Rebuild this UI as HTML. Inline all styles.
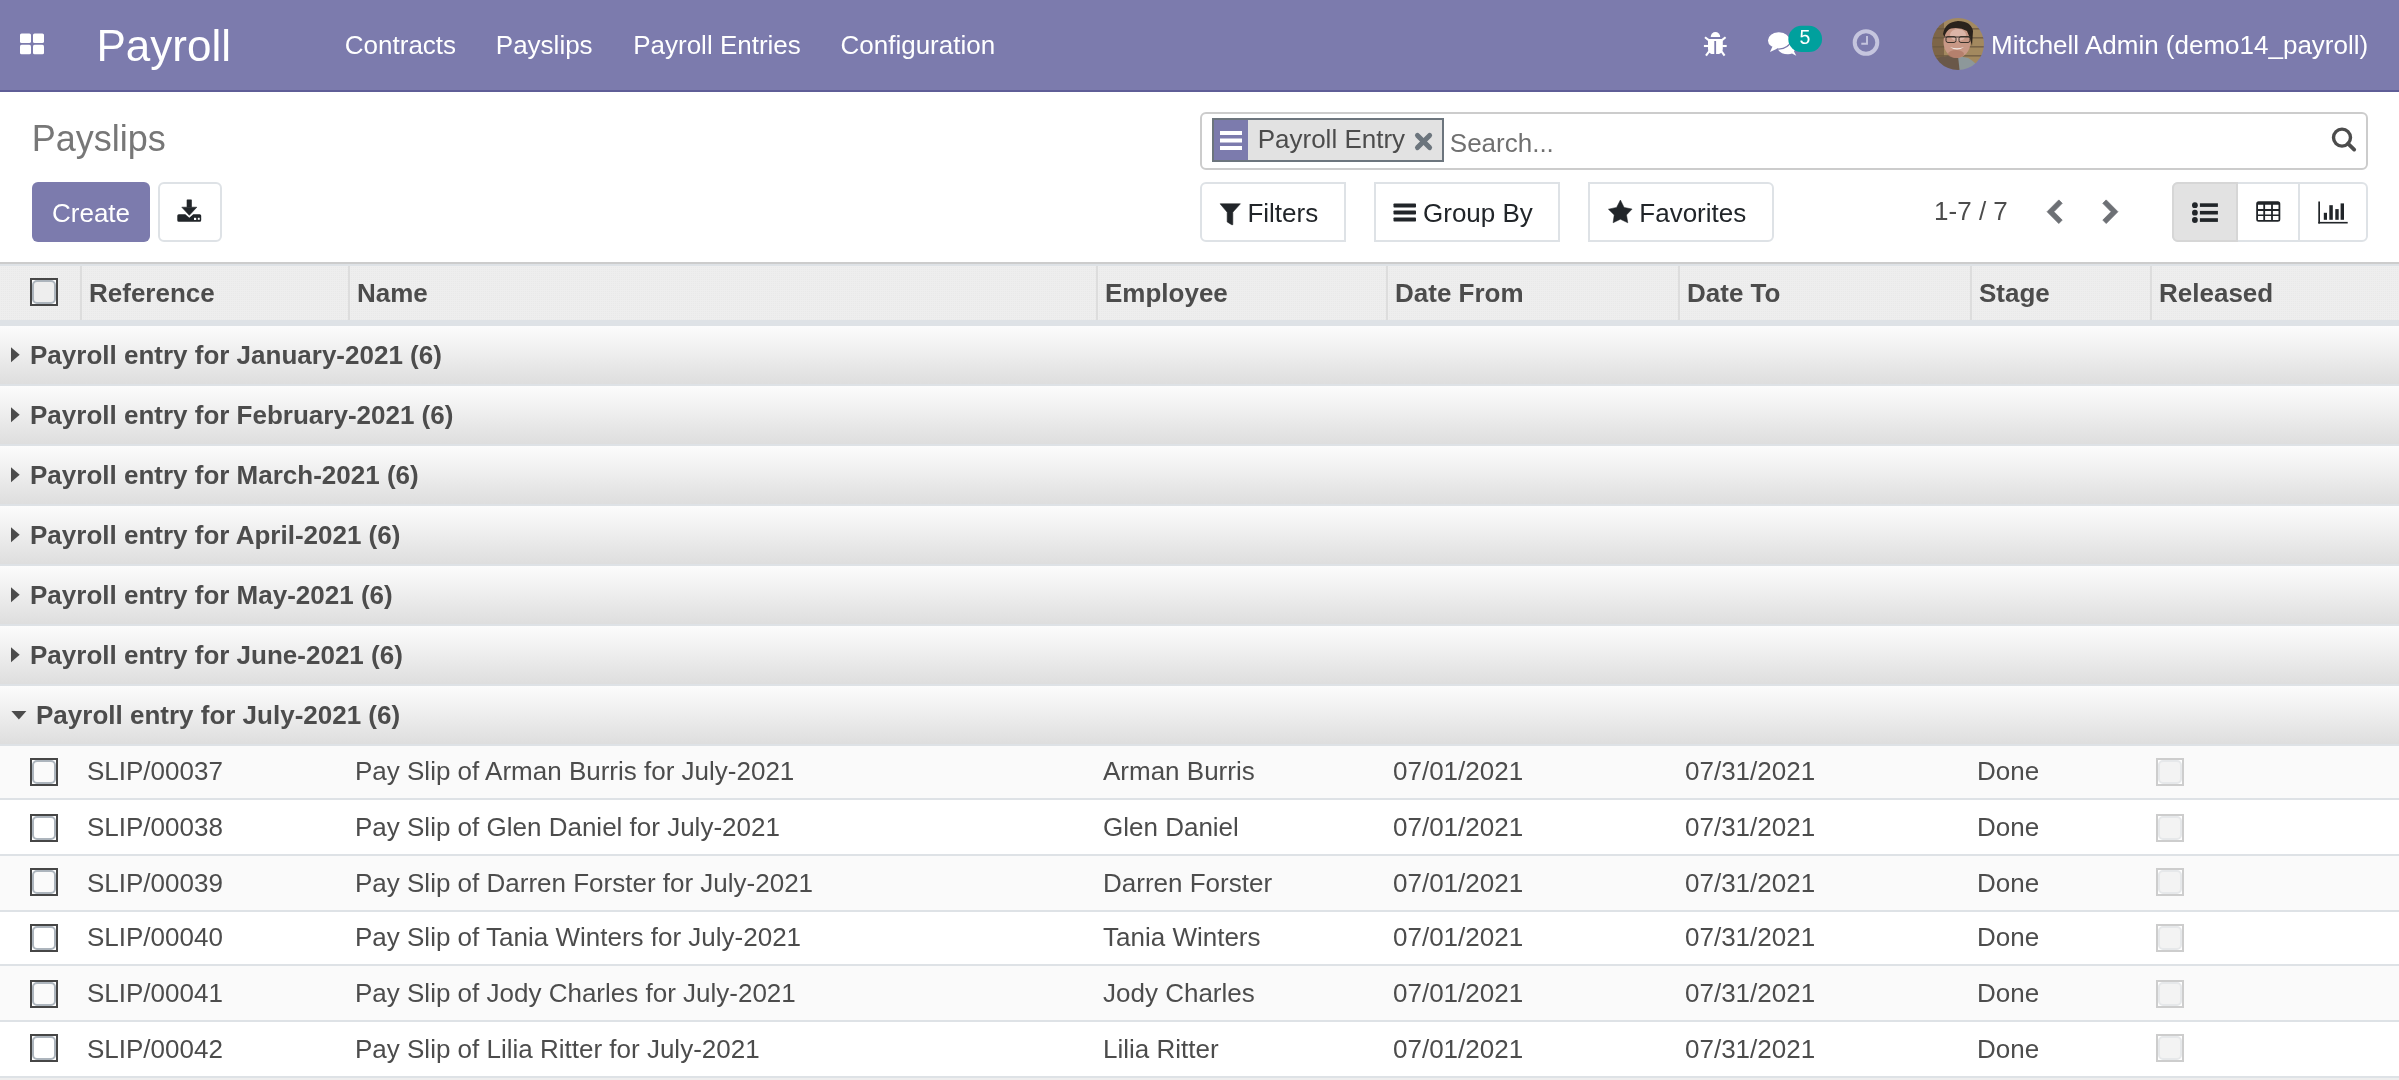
<!DOCTYPE html>
<html><head><meta charset="utf-8"><title>Payslips - Odoo</title>
<style>
html,body{margin:0;padding:0;width:2399px;height:1080px;overflow:hidden;background:#fff;font-family:"Liberation Sans", sans-serif;}
.a{position:absolute;white-space:nowrap;}
#root{position:absolute;left:0;top:0;width:2399px;height:1080px;overflow:hidden;will-change:transform}
svg.a{overflow:visible}
</style></head><body><div id="root">
<div class="a" style="left:0px;top:0px;width:2399px;height:90px;background:#7c7bad"></div>
<div class="a" style="left:0px;top:90px;width:2399px;height:2px;background:#5f5e97"></div>
<svg class="a" style="left:20px;top:33px" width="25" height="22" viewBox="0 0 25 22"><g fill="#fff"><rect x="0" y="0.5" width="11" height="9.5" rx="1.6"/><rect x="13" y="0.5" width="11" height="9.5" rx="1.6"/><rect x="0" y="11.8" width="11" height="9.5" rx="1.6"/><rect x="13" y="11.8" width="11" height="9.5" rx="1.6"/></g></svg>
<div class="a" style="left:96.5px;top:23.5px;font-size:44px;line-height:44px;color:#fff;">Payroll</div>
<div class="a" style="left:344.8px;top:32px;font-size:26px;line-height:26px;color:#fff;">Contracts</div>
<div class="a" style="left:495.8px;top:32px;font-size:26px;line-height:26px;color:#fff;">Payslips</div>
<div class="a" style="left:633.2px;top:32px;font-size:26px;line-height:26px;color:#fff;">Payroll Entries</div>
<div class="a" style="left:840.5px;top:32px;font-size:26px;line-height:26px;color:#fff;">Configuration</div>
<svg class="a" style="left:1695px;top:25px" width="40" height="40" viewBox="0 0 40 40"><g fill="#fff">
<path d="M15.7 12 A4.75 5 0 0 1 25.2 12 Z"/>
<path d="M13 14.1 H27.8 V24 Q27.5 28 24 28.9 Q22.5 29.2 21.1 28.9 V15.9 H19.3 V28.9 Q17.9 29.2 16.5 28.9 Q13.2 28 13 24 Z"/>
</g><g stroke="#fff" stroke-width="2.1" stroke-linecap="butt">
<line x1="10" y1="12.2" x2="14" y2="15.4"/><line x1="30.6" y1="12.2" x2="26.6" y2="15.4"/>
<line x1="8.9" y1="21" x2="13.5" y2="21"/><line x1="31.7" y1="21" x2="27.3" y2="21"/>
<line x1="11" y1="30.6" x2="14.5" y2="25.8"/><line x1="29.6" y1="30.6" x2="26.1" y2="25.8"/>
</g></svg>
<svg class="a" style="left:1760px;top:20px" width="70" height="45" viewBox="0 0 70 45"><g fill="#fff">
<path d="M17 28 Q20 34.2 28 34.2 Q30.5 34.2 32 33.6 L36.3 35.8 L34 31.5 Q35.5 29 35 26 Q34 22 29 20 Z"/>
<ellipse cx="18.8" cy="20.4" rx="11.5" ry="8.7" stroke="#7c7bad" stroke-width="1.3"/>
<path d="M10 31.9 L12.6 26.2 L17.5 28.6 Z"/>
</g>
<rect x="28.3" y="5.8" width="33.8" height="26.3" rx="13.1" fill="#00a09d"/></svg>
<div class="a" style="left:1788px;top:24px;width:34px;height:26px;line-height:26px;text-align:center;font-size:19.5px;color:#fff">5</div>
<svg class="a" style="left:1845px;top:22px" width="40" height="40" viewBox="0 0 40 40"><g fill="none" stroke="#c5c5de" stroke-width="4"><circle cx="21" cy="20.5" r="11.3"/></g>
<g stroke="#c5c5de" stroke-width="1.9" fill="none"><path d="M22 14 V21.8 H16.3"/></g></svg>
<svg class="a" style="left:1932px;top:18px" width="52" height="52" viewBox="0 0 52 52"><defs><clipPath id="cav"><circle cx="26" cy="26" r="26"/></clipPath><filter id="bl" x="-10%" y="-10%" width="120%" height="120%"><feGaussianBlur stdDeviation="0.7"/></filter></defs>
<g clip-path="url(#cav)"><g filter="url(#bl)">
<rect x="-2" y="-2" width="56" height="56" fill="#a3895f"/>
<rect x="-2" y="-2" width="14" height="56" fill="#7d6547"/>
<g fill="#6e5a40" opacity="0.8"><rect x="0" y="10" width="52" height="1.6"/><rect x="0" y="19" width="52" height="1.6"/><rect x="0" y="28" width="52" height="1.6"/><rect x="0" y="37" width="52" height="1.6"/><rect x="0" y="46" width="52" height="1.6"/></g>
<path d="M-2 54 L-2 44 Q6 38 16 38 L30 40 Q40 42 46 48 L46 54 Z" fill="#6a5848"/>
<path d="M26 38 L36 40 Q44 44 48 52 L48 56 L28 56 Z" fill="#8d989a"/>
<ellipse cx="25" cy="24" rx="13.5" ry="16" fill="#c89886"/>
<ellipse cx="26" cy="17" rx="8" ry="6" fill="#e0bdb0" opacity="0.8"/>
<ellipse cx="24" cy="36" rx="8" ry="4" fill="#b07a66" opacity="0.8"/>
<path d="M11 16 Q13 4 26 3 Q39 3 41 13 L40 28 Q38 19 35 13 Q28 9 19 10.5 Q14 12 12.5 19 Z" fill="#2b211b"/>
<g stroke="#3a322c" stroke-width="1" fill="none"><path d="M12 19 H39"/><rect x="14" y="18.5" width="10" height="6" rx="2"/><rect x="27" y="18.5" width="11" height="6" rx="2"/></g>
<path d="M18 29 Q25 34 32 29 Q25 31.5 18 29 Z" fill="#f4ece8"/>
</g></g></svg>
<div class="a" style="left:1991px;top:32px;font-size:26px;line-height:26px;color:#fff;">Mitchell Admin (demo14_payroll)</div>
<div class="a" style="left:31.7px;top:120.80000000000001px;font-size:36px;line-height:36px;color:#777777;">Payslips</div>
<div class="a" style="left:1200px;top:112px;width:1168px;height:58px;box-sizing:border-box;border:2px solid #cccccc;border-radius:6px;background:#fff"></div>
<div class="a" style="left:1212px;top:118px;width:232px;height:44px;box-sizing:border-box;border:2px solid #6c757d;background:#e2e2e2"></div>
<div class="a" style="left:1214px;top:120px;width:34px;height:40px;background:#7c7bad"></div>
<svg class="a" style="left:1220px;top:130px" width="23" height="21" viewBox="0 0 23 21"><g fill="#fff"><rect x="0" y="1" width="22" height="4"/><rect x="0" y="8.5" width="22" height="4"/><rect x="0" y="16" width="22" height="4"/></g></svg>
<div class="a" style="left:1257.7px;top:126px;font-size:26px;line-height:26px;color:#4c4c4c;">Payroll Entry</div>
<svg class="a" style="left:1413px;top:131px" width="21" height="21" viewBox="0 0 21 21"><g stroke="#6c757d" stroke-width="5" stroke-linecap="round"><line x1="4.5" y1="4.4" x2="16.6" y2="16.6"/><line x1="16.6" y1="4.4" x2="4.5" y2="16.6"/></g></svg>
<div class="a" style="left:1449.8px;top:129.8px;font-size:26px;line-height:26px;color:#707070;">Search...</div>
<svg class="a" style="left:2330px;top:125px" width="30" height="30" viewBox="0 0 30 30"><g stroke="#4c4c4c" fill="none"><circle cx="12" cy="12.6" r="8.5" stroke-width="3.4"/><line x1="18" y1="18.6" x2="24.2" y2="24.6" stroke-width="3.8" stroke-linecap="round"/></g></svg>
<div class="a" style="left:32px;top:182px;width:118px;height:60px;background:#7c7bad;border-radius:6px"></div>
<div class="a" style="left:52px;top:200px;font-size:26px;line-height:26px;color:#fff;">Create</div>
<div class="a" style="left:158px;top:182px;width:64px;height:60px;box-sizing:border-box;border:2px solid #dee2e6;border-radius:6px;background:#fff"></div>
<svg class="a" style="left:176px;top:198px" width="28" height="26" viewBox="0 0 28 26"><g fill="#212529"><rect x="10.7" y="1.5" width="5.1" height="8" rx="0.6"/><path d="M5.8 9.2 H20.8 L13.3 17.3 Z" stroke="#212529" stroke-width="0.6" stroke-linejoin="round"/><path d="M2.8 16.3 H9.3 L13.3 19.8 L17.3 16.3 H23.7 Q25.2 16.3 25.2 17.8 V22.2 Q25.2 23.7 23.7 23.7 H2.8 Q1.3 23.7 1.3 22.2 V17.8 Q1.3 16.3 2.8 16.3 Z"/></g><g fill="#fff"><rect x="18" y="19.8" width="2.2" height="2.2"/><rect x="21.8" y="19.8" width="1.9" height="2"/></g></svg>
<div class="a" style="left:1200px;top:182px;width:146px;height:60px;box-sizing:border-box;border:2px solid #dee2e6;border-radius:6px 0 0 6px;background:#fff"></div>
<div class="a" style="left:1374px;top:182px;width:186px;height:60px;box-sizing:border-box;border:2px solid #dee2e6;background:#fff"></div>
<div class="a" style="left:1588px;top:182px;width:186px;height:60px;box-sizing:border-box;border:2px solid #dee2e6;border-radius:0 6px 6px 0;background:#fff"></div>
<svg class="a" style="left:1219px;top:202px" width="23" height="24" viewBox="0 0 23 24"><path d="M1.1 1.8 H21.4 L13.8 10.2 V22.7 L12.7 22.7 L8.2 19.9 V10.2 Z" fill="#212529" stroke="#212529" stroke-width="0.6" stroke-linejoin="round"/></svg>
<div class="a" style="left:1247.4px;top:200px;font-size:26px;line-height:26px;color:#212529;">Filters</div>
<svg class="a" style="left:1393px;top:202px" width="24" height="22" viewBox="0 0 24 22"><g fill="#212529"><rect x="0.5" y="1.5" width="22.5" height="4" rx="0.8"/><rect x="0.5" y="8.5" width="22.5" height="4" rx="0.8"/><rect x="0.5" y="15.5" width="22.5" height="4" rx="0.8"/></g></svg>
<div class="a" style="left:1423px;top:200px;font-size:26px;line-height:26px;color:#212529;">Group By</div>
<svg class="a" style="left:1607px;top:199px" width="26" height="26" viewBox="0 0 26 26"><path d="M13.4 1 L17.1 8.4 L25.1 10.1 L19.5 15.9 L20.8 23.8 L13.4 20.2 L6.1 23.8 L7.2 15.9 L1.4 10.2 L9.6 8.4 Z" fill="#212529" stroke="#212529" stroke-width="0.5" stroke-linejoin="round"/></svg>
<div class="a" style="left:1639.3px;top:200px;font-size:26px;line-height:26px;color:#212529;">Favorites</div>
<div class="a" style="left:1934.1px;top:198px;font-size:26px;line-height:26px;color:#4c4c4c;">1-7 / 7</div>
<svg class="a" style="left:2045px;top:198px" width="20" height="28" viewBox="0 0 20 28"><path d="M2.1 13.7 L13.8 1.9 L17.2 5.3 L8.9 13.7 L17.2 22.1 L13.8 25.5 Z" fill="#6d7075" stroke="#6d7075" stroke-width="0.8" stroke-linejoin="round"/></svg>
<svg class="a" style="left:2100px;top:198px" width="20" height="28" viewBox="0 0 20 28"><path d="M17.9 13.7 L6.2 1.9 L2.8 5.3 L11.1 13.7 L2.8 22.1 L6.2 25.5 Z" fill="#6d7075" stroke="#6d7075" stroke-width="0.8" stroke-linejoin="round"/></svg>
<div class="a" style="left:2172px;top:182px;width:196px;height:60px;box-sizing:border-box;border:2px solid #dee2e6;border-radius:6px;background:#fff"></div>
<div class="a" style="left:2172px;top:182px;width:66px;height:60px;box-sizing:border-box;border:2px solid #d6d6d6;border-radius:6px 0 0 6px;background:#e2e2e2"></div>
<div class="a" style="left:2298px;top:184px;width:2px;height:56px;background:#dee2e6"></div>
<svg class="a" style="left:2190px;top:200px" width="30" height="25" viewBox="0 0 30 25"><g fill="#212529"><circle cx="4.9" cy="5.2" r="2.9"/><circle cx="4.9" cy="12.7" r="2.9"/><circle cx="4.9" cy="20" r="2.9"/><rect x="9.9" y="3.3" width="18" height="3.6"/><rect x="9.9" y="10.9" width="18" height="3.6"/><rect x="9.9" y="18.2" width="18" height="3.7"/></g></svg>
<svg class="a" style="left:2255px;top:200px" width="27" height="24" viewBox="0 0 27 24"><path fill-rule="evenodd" fill="#212529" d="M3.7 1.2 H22.8 Q25.3 1.2 25.3 3.7 V19.2 Q25.3 21.7 22.8 21.7 H3.7 Q1.2 21.7 1.2 19.2 V3.7 Q1.2 1.2 3.7 1.2 Z M3 4.7 V8.9 H8.3 V4.7 Z M10.1 4.7 V8.9 H16.1 V4.7 Z M17.9 4.7 V8.9 H23.5 V4.7 Z M3 10.9 V14.4 H8.3 V10.9 Z M10.1 10.9 V14.4 H16.1 V10.9 Z M17.9 10.9 V14.4 H23.5 V10.9 Z M3 16.1 V19.9 H8.3 V16.1 Z M10.1 16.1 V19.9 H16.1 V16.1 Z M17.9 16.1 V19.9 H23.5 V16.1 Z"/></svg>
<svg class="a" style="left:2316px;top:199px" width="34" height="27" viewBox="0 0 34 27"><g fill="#212529"><rect x="2.3" y="2.5" width="1.7" height="22"/><rect x="2.3" y="22.9" width="29.4" height="1.6"/><rect x="7.8" y="13.8" width="3.2" height="7"/><rect x="13.3" y="6.2" width="3.5" height="14.6"/><rect x="19.3" y="10.1" width="3.4" height="10.7"/><rect x="24.6" y="4.4" width="3.4" height="16.4"/></g></svg>
<div class="a" style="left:0px;top:262px;width:2399px;height:2px;background:#cccccc"></div>
<div class="a" style="left:0px;top:264px;width:2399px;height:2px;background:#dee2e6"></div>
<div class="a" style="left:0px;top:266px;width:2399px;height:54px;background-color:#eeeeee;background-image:linear-gradient(90deg,#eeeeee 1px,transparent 1px),linear-gradient(#eeeeee 1px,#e9e9e9 1px);background-size:2px 2px"></div>
<div class="a" style="left:0px;top:320px;width:2399px;height:6px;background:#dee2e6"></div>
<div class="a" style="left:80px;top:266px;width:2px;height:54px;background:#dddddd"></div>
<div class="a" style="left:348px;top:266px;width:2px;height:54px;background:#dddddd"></div>
<div class="a" style="left:1096px;top:266px;width:2px;height:54px;background:#dddddd"></div>
<div class="a" style="left:1386px;top:266px;width:2px;height:54px;background:#dddddd"></div>
<div class="a" style="left:1678px;top:266px;width:2px;height:54px;background:#dddddd"></div>
<div class="a" style="left:1970px;top:266px;width:2px;height:54px;background:#dddddd"></div>
<div class="a" style="left:2150px;top:266px;width:2px;height:54px;background:#dddddd"></div>
<div class="a" style="left:30px;top:278px;width:28px;height:28px;box-sizing:border-box;border:2px solid #464646;background:#fff"></div>
<div class="a" style="left:32px;top:280px;width:24px;height:24px;box-sizing:border-box;border:2px solid #adb5bd;border-radius:5px;background:#eeeeee"></div>
<div class="a" style="left:89px;top:280px;font-size:26px;line-height:26px;color:#4c4c4c;font-weight:bold;">Reference</div>
<div class="a" style="left:357px;top:280px;font-size:26px;line-height:26px;color:#4c4c4c;font-weight:bold;">Name</div>
<div class="a" style="left:1105px;top:280px;font-size:26px;line-height:26px;color:#4c4c4c;font-weight:bold;">Employee</div>
<div class="a" style="left:1395px;top:280px;font-size:26px;line-height:26px;color:#4c4c4c;font-weight:bold;">Date From</div>
<div class="a" style="left:1687px;top:280px;font-size:26px;line-height:26px;color:#4c4c4c;font-weight:bold;">Date To</div>
<div class="a" style="left:1979px;top:280px;font-size:26px;line-height:26px;color:#4c4c4c;font-weight:bold;">Stage</div>
<div class="a" style="left:2159px;top:280px;font-size:26px;line-height:26px;color:#4c4c4c;font-weight:bold;">Released</div>
<div class="a" style="left:0px;top:326px;width:2399px;height:58px;background:linear-gradient(#fcfcfc,#dedede)"></div>
<div class="a" style="left:0px;top:384px;width:2399px;height:2px;background:#dee2e6"></div>
<svg class="a" style="left:10px;top:346px" width="12" height="18" viewBox="0 0 12 18"><path d="M1 1.2 L9.7 8.7 L1 16.2 Z" fill="#4c4c4c"/></svg>
<div class="a" style="left:30px;top:342px;font-size:26px;line-height:26px;color:#4c4c4c;font-weight:bold;">Payroll entry for January-2021 (6)</div>
<div class="a" style="left:0px;top:386px;width:2399px;height:58px;background:linear-gradient(#fcfcfc,#dedede)"></div>
<div class="a" style="left:0px;top:444px;width:2399px;height:2px;background:#dee2e6"></div>
<svg class="a" style="left:10px;top:406px" width="12" height="18" viewBox="0 0 12 18"><path d="M1 1.2 L9.7 8.7 L1 16.2 Z" fill="#4c4c4c"/></svg>
<div class="a" style="left:30px;top:402px;font-size:26px;line-height:26px;color:#4c4c4c;font-weight:bold;">Payroll entry for February-2021 (6)</div>
<div class="a" style="left:0px;top:446px;width:2399px;height:58px;background:linear-gradient(#fcfcfc,#dedede)"></div>
<div class="a" style="left:0px;top:504px;width:2399px;height:2px;background:#dee2e6"></div>
<svg class="a" style="left:10px;top:466px" width="12" height="18" viewBox="0 0 12 18"><path d="M1 1.2 L9.7 8.7 L1 16.2 Z" fill="#4c4c4c"/></svg>
<div class="a" style="left:30px;top:462px;font-size:26px;line-height:26px;color:#4c4c4c;font-weight:bold;">Payroll entry for March-2021 (6)</div>
<div class="a" style="left:0px;top:506px;width:2399px;height:58px;background:linear-gradient(#fcfcfc,#dedede)"></div>
<div class="a" style="left:0px;top:564px;width:2399px;height:2px;background:#dee2e6"></div>
<svg class="a" style="left:10px;top:526px" width="12" height="18" viewBox="0 0 12 18"><path d="M1 1.2 L9.7 8.7 L1 16.2 Z" fill="#4c4c4c"/></svg>
<div class="a" style="left:30px;top:522px;font-size:26px;line-height:26px;color:#4c4c4c;font-weight:bold;">Payroll entry for April-2021 (6)</div>
<div class="a" style="left:0px;top:566px;width:2399px;height:58px;background:linear-gradient(#fcfcfc,#dedede)"></div>
<div class="a" style="left:0px;top:624px;width:2399px;height:2px;background:#dee2e6"></div>
<svg class="a" style="left:10px;top:586px" width="12" height="18" viewBox="0 0 12 18"><path d="M1 1.2 L9.7 8.7 L1 16.2 Z" fill="#4c4c4c"/></svg>
<div class="a" style="left:30px;top:582px;font-size:26px;line-height:26px;color:#4c4c4c;font-weight:bold;">Payroll entry for May-2021 (6)</div>
<div class="a" style="left:0px;top:626px;width:2399px;height:58px;background:linear-gradient(#fcfcfc,#dedede)"></div>
<div class="a" style="left:0px;top:684px;width:2399px;height:2px;background:#dee2e6"></div>
<svg class="a" style="left:10px;top:646px" width="12" height="18" viewBox="0 0 12 18"><path d="M1 1.2 L9.7 8.7 L1 16.2 Z" fill="#4c4c4c"/></svg>
<div class="a" style="left:30px;top:642px;font-size:26px;line-height:26px;color:#4c4c4c;font-weight:bold;">Payroll entry for June-2021 (6)</div>
<div class="a" style="left:0px;top:686px;width:2399px;height:58px;background:linear-gradient(#fcfcfc,#dedede)"></div>
<div class="a" style="left:0px;top:744px;width:2399px;height:2px;background:#dee2e6"></div>
<svg class="a" style="left:10px;top:710px" width="18" height="12" viewBox="0 0 18 12"><path d="M1.4 1 H16.4 L8.9 9.6 Z" fill="#4c4c4c"/></svg>
<div class="a" style="left:36px;top:702px;font-size:26px;line-height:26px;color:#4c4c4c;font-weight:bold;">Payroll entry for July-2021 (6)</div>
<div class="a" style="left:0px;top:746px;width:2399px;height:52px;background:#fafafa"></div>
<div class="a" style="left:0px;top:798px;width:2399px;height:2px;background:#dee2e6"></div>
<div class="a" style="left:30px;top:758px;width:28px;height:28px;box-sizing:border-box;border:2px solid #464646;background:#fff"></div>
<div class="a" style="left:32px;top:760px;width:24px;height:24px;box-sizing:border-box;border:2px solid #adb5bd;border-radius:5px;background:#fafafa"></div>
<div class="a" style="left:87px;top:758px;font-size:26px;line-height:26px;color:#4c4c4c;">SLIP/00037</div>
<div class="a" style="left:355px;top:758px;font-size:26px;line-height:26px;color:#4c4c4c;">Pay Slip of Arman Burris for July-2021</div>
<div class="a" style="left:1103px;top:758px;font-size:26px;line-height:26px;color:#4c4c4c;">Arman Burris</div>
<div class="a" style="left:1393px;top:758px;font-size:26px;line-height:26px;color:#4c4c4c;">07/01/2021</div>
<div class="a" style="left:1685px;top:758px;font-size:26px;line-height:26px;color:#4c4c4c;">07/31/2021</div>
<div class="a" style="left:1977px;top:758px;font-size:26px;line-height:26px;color:#4c4c4c;">Done</div>
<div class="a" style="left:2156px;top:758px;width:28px;height:28px;box-sizing:border-box;border:2px solid #cdcdcd;background:#fff"></div>
<div class="a" style="left:2158px;top:760px;width:24px;height:24px;box-sizing:border-box;border:2px solid #e6e8ea;border-radius:5px;background:#f3f3f3"></div>
<div class="a" style="left:0px;top:800px;width:2399px;height:54px;background:#ffffff"></div>
<div class="a" style="left:0px;top:854px;width:2399px;height:2px;background:#dee2e6"></div>
<div class="a" style="left:30px;top:814px;width:28px;height:28px;box-sizing:border-box;border:2px solid #464646;background:#fff"></div>
<div class="a" style="left:32px;top:816px;width:24px;height:24px;box-sizing:border-box;border:2px solid #adb5bd;border-radius:5px;background:#ffffff"></div>
<div class="a" style="left:87px;top:814px;font-size:26px;line-height:26px;color:#4c4c4c;">SLIP/00038</div>
<div class="a" style="left:355px;top:814px;font-size:26px;line-height:26px;color:#4c4c4c;">Pay Slip of Glen Daniel for July-2021</div>
<div class="a" style="left:1103px;top:814px;font-size:26px;line-height:26px;color:#4c4c4c;">Glen Daniel</div>
<div class="a" style="left:1393px;top:814px;font-size:26px;line-height:26px;color:#4c4c4c;">07/01/2021</div>
<div class="a" style="left:1685px;top:814px;font-size:26px;line-height:26px;color:#4c4c4c;">07/31/2021</div>
<div class="a" style="left:1977px;top:814px;font-size:26px;line-height:26px;color:#4c4c4c;">Done</div>
<div class="a" style="left:2156px;top:814px;width:28px;height:28px;box-sizing:border-box;border:2px solid #cdcdcd;background:#fff"></div>
<div class="a" style="left:2158px;top:816px;width:24px;height:24px;box-sizing:border-box;border:2px solid #e6e8ea;border-radius:5px;background:#f3f3f3"></div>
<div class="a" style="left:0px;top:856px;width:2399px;height:54px;background:#fafafa"></div>
<div class="a" style="left:0px;top:910px;width:2399px;height:2px;background:#dee2e6"></div>
<div class="a" style="left:30px;top:868px;width:28px;height:28px;box-sizing:border-box;border:2px solid #464646;background:#fff"></div>
<div class="a" style="left:32px;top:870px;width:24px;height:24px;box-sizing:border-box;border:2px solid #adb5bd;border-radius:5px;background:#fafafa"></div>
<div class="a" style="left:87px;top:870px;font-size:26px;line-height:26px;color:#4c4c4c;">SLIP/00039</div>
<div class="a" style="left:355px;top:870px;font-size:26px;line-height:26px;color:#4c4c4c;">Pay Slip of Darren Forster for July-2021</div>
<div class="a" style="left:1103px;top:870px;font-size:26px;line-height:26px;color:#4c4c4c;">Darren Forster</div>
<div class="a" style="left:1393px;top:870px;font-size:26px;line-height:26px;color:#4c4c4c;">07/01/2021</div>
<div class="a" style="left:1685px;top:870px;font-size:26px;line-height:26px;color:#4c4c4c;">07/31/2021</div>
<div class="a" style="left:1977px;top:870px;font-size:26px;line-height:26px;color:#4c4c4c;">Done</div>
<div class="a" style="left:2156px;top:868px;width:28px;height:28px;box-sizing:border-box;border:2px solid #cdcdcd;background:#fff"></div>
<div class="a" style="left:2158px;top:870px;width:24px;height:24px;box-sizing:border-box;border:2px solid #e6e8ea;border-radius:5px;background:#f3f3f3"></div>
<div class="a" style="left:0px;top:912px;width:2399px;height:52px;background:#ffffff"></div>
<div class="a" style="left:0px;top:964px;width:2399px;height:2px;background:#dee2e6"></div>
<div class="a" style="left:30px;top:924px;width:28px;height:28px;box-sizing:border-box;border:2px solid #464646;background:#fff"></div>
<div class="a" style="left:32px;top:926px;width:24px;height:24px;box-sizing:border-box;border:2px solid #adb5bd;border-radius:5px;background:#ffffff"></div>
<div class="a" style="left:87px;top:924px;font-size:26px;line-height:26px;color:#4c4c4c;">SLIP/00040</div>
<div class="a" style="left:355px;top:924px;font-size:26px;line-height:26px;color:#4c4c4c;">Pay Slip of Tania Winters for July-2021</div>
<div class="a" style="left:1103px;top:924px;font-size:26px;line-height:26px;color:#4c4c4c;">Tania Winters</div>
<div class="a" style="left:1393px;top:924px;font-size:26px;line-height:26px;color:#4c4c4c;">07/01/2021</div>
<div class="a" style="left:1685px;top:924px;font-size:26px;line-height:26px;color:#4c4c4c;">07/31/2021</div>
<div class="a" style="left:1977px;top:924px;font-size:26px;line-height:26px;color:#4c4c4c;">Done</div>
<div class="a" style="left:2156px;top:924px;width:28px;height:28px;box-sizing:border-box;border:2px solid #cdcdcd;background:#fff"></div>
<div class="a" style="left:2158px;top:926px;width:24px;height:24px;box-sizing:border-box;border:2px solid #e6e8ea;border-radius:5px;background:#f3f3f3"></div>
<div class="a" style="left:0px;top:966px;width:2399px;height:54px;background:#fafafa"></div>
<div class="a" style="left:0px;top:1020px;width:2399px;height:2px;background:#dee2e6"></div>
<div class="a" style="left:30px;top:980px;width:28px;height:28px;box-sizing:border-box;border:2px solid #464646;background:#fff"></div>
<div class="a" style="left:32px;top:982px;width:24px;height:24px;box-sizing:border-box;border:2px solid #adb5bd;border-radius:5px;background:#fafafa"></div>
<div class="a" style="left:87px;top:980px;font-size:26px;line-height:26px;color:#4c4c4c;">SLIP/00041</div>
<div class="a" style="left:355px;top:980px;font-size:26px;line-height:26px;color:#4c4c4c;">Pay Slip of Jody Charles for July-2021</div>
<div class="a" style="left:1103px;top:980px;font-size:26px;line-height:26px;color:#4c4c4c;">Jody Charles</div>
<div class="a" style="left:1393px;top:980px;font-size:26px;line-height:26px;color:#4c4c4c;">07/01/2021</div>
<div class="a" style="left:1685px;top:980px;font-size:26px;line-height:26px;color:#4c4c4c;">07/31/2021</div>
<div class="a" style="left:1977px;top:980px;font-size:26px;line-height:26px;color:#4c4c4c;">Done</div>
<div class="a" style="left:2156px;top:980px;width:28px;height:28px;box-sizing:border-box;border:2px solid #cdcdcd;background:#fff"></div>
<div class="a" style="left:2158px;top:982px;width:24px;height:24px;box-sizing:border-box;border:2px solid #e6e8ea;border-radius:5px;background:#f3f3f3"></div>
<div class="a" style="left:0px;top:1022px;width:2399px;height:54px;background:#ffffff"></div>
<div class="a" style="left:0px;top:1076px;width:2399px;height:2px;background:#dee2e6"></div>
<div class="a" style="left:30px;top:1034px;width:28px;height:28px;box-sizing:border-box;border:2px solid #464646;background:#fff"></div>
<div class="a" style="left:32px;top:1036px;width:24px;height:24px;box-sizing:border-box;border:2px solid #adb5bd;border-radius:5px;background:#ffffff"></div>
<div class="a" style="left:87px;top:1036px;font-size:26px;line-height:26px;color:#4c4c4c;">SLIP/00042</div>
<div class="a" style="left:355px;top:1036px;font-size:26px;line-height:26px;color:#4c4c4c;">Pay Slip of Lilia Ritter for July-2021</div>
<div class="a" style="left:1103px;top:1036px;font-size:26px;line-height:26px;color:#4c4c4c;">Lilia Ritter</div>
<div class="a" style="left:1393px;top:1036px;font-size:26px;line-height:26px;color:#4c4c4c;">07/01/2021</div>
<div class="a" style="left:1685px;top:1036px;font-size:26px;line-height:26px;color:#4c4c4c;">07/31/2021</div>
<div class="a" style="left:1977px;top:1036px;font-size:26px;line-height:26px;color:#4c4c4c;">Done</div>
<div class="a" style="left:2156px;top:1034px;width:28px;height:28px;box-sizing:border-box;border:2px solid #cdcdcd;background:#fff"></div>
<div class="a" style="left:2158px;top:1036px;width:24px;height:24px;box-sizing:border-box;border:2px solid #e6e8ea;border-radius:5px;background:#f3f3f3"></div>
<div class="a" style="left:0px;top:1078px;width:2399px;height:2px;background:#eeeeee"></div>
</div></body></html>
